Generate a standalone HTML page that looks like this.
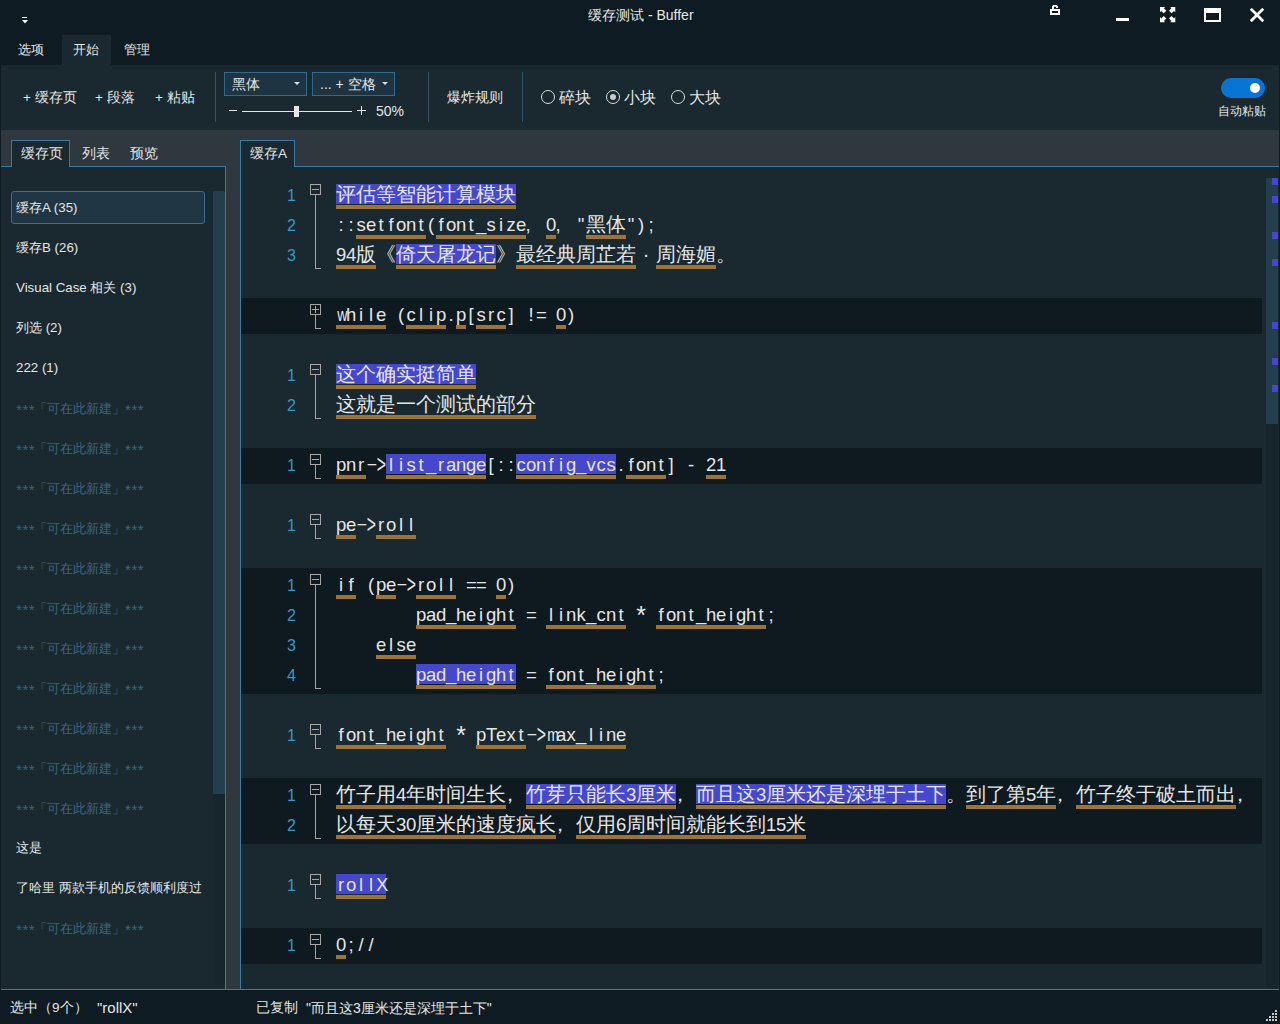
<!DOCTYPE html>
<html><head><meta charset="utf-8">
<style>
*{box-sizing:border-box}
html,body{margin:0;padding:0}
body{width:1280px;height:1024px;overflow:hidden;position:relative;background:#0f1b22;font-family:"Liberation Sans",sans-serif;color:#e6e6e6;font-size:13px}
.a{position:absolute}
.t{position:absolute;white-space:nowrap;line-height:20px}
.fb{position:absolute;left:310px;width:11px;height:11px;border:1px solid #a6a6a6}
.fm{position:absolute;left:312px;width:7px;height:1px;background:#a6a6a6}
.fv{position:absolute;left:315px;width:1px;height:7px;background:#a6a6a6}
.fl{position:absolute;left:315px;width:1px;background:#a6a6a6}
.ff{position:absolute;left:315px;width:6px;height:1px;background:#a6a6a6}
.ln{position:absolute;left:256px;width:40px;text-align:right;line-height:30px;font-size:16px;color:#3a98c2}
.hl{position:absolute;height:20px;background:#4547cc}
.ul{position:absolute;height:4px;background:#9e7436}
.ca{position:absolute;white-space:pre;line-height:30px;font-family:"Liberation Sans",sans-serif;font-size:18.5px;color:#e6e6e6;display:flex}
.ca i{display:block;width:10px;text-align:center;font-style:normal;height:30px}
.ca i.n{transform:scaleX(0.76)}
.ca i.u{transform:translateY(-1.5px)}
.ca i.c{transform:translateX(-3px)}
.ca i.s{transform:scale(1.35);transform-origin:50% 40%}
.ca i.d{transform:translate(1px,-1.5px) scaleX(1.9)}
.ca i.g{transform:scale(0.85,1.4);transform-origin:50% 57%}
.cj{position:absolute;white-space:pre;line-height:30px;font-size:20px;color:#e6e6e6}
.it{position:absolute;left:16px;white-space:nowrap;line-height:20px;font-size:13.3px}
</style></head><body>
<!-- title bar -->
<div class="a" style="left:0;top:0;width:1280px;height:65px;background:#0f1b22"></div>
<!-- app icon -->
<div class="a" style="left:22px;top:17px;width:5px;height:1px;background:#fff"></div>
<svg class="a" style="left:21px;top:19px" width="8" height="6" viewBox="0 0 8 6"><path d="M1 1H7L4 4.5Z" fill="#fff"/></svg>
<div class="t" style="left:588px;top:5px;font-size:14px;color:#e8e8e8">缓存测试 - Buffer</div>
<!-- lock -->
<svg class="a" style="left:1049px;top:4px" width="12" height="12" viewBox="0 0 12 12" fill="#fff"><path d="M3 5V2.5L4 1H7.6L9 2.2V4H7V2.8H5V5Z"/><path fill-rule="evenodd" d="M1 5H11V11H1ZM3 7H9V9H3Z"/></svg>
<!-- minimize -->
<div class="a" style="left:1116px;top:18px;width:13px;height:3px;background:#fff"></div>
<!-- fullscreen -->
<svg class="a" style="left:1160px;top:7px" width="16" height="16" viewBox="0 0 16 16" fill="#fff">
<path d="M0 0H5.2L3.9 1.3L6.3 3.7L3.7 6.3L1.3 3.9L0 5.2Z"/><path d="M0 0H5.2L3.9 1.3L6.3 3.7L3.7 6.3L1.3 3.9L0 5.2Z" transform="translate(15.3 0) scale(-1 1)"/><path d="M0 0H5.2L3.9 1.3L6.3 3.7L3.7 6.3L1.3 3.9L0 5.2Z" transform="translate(0 15.3) scale(1 -1)"/><path d="M0 0H5.2L3.9 1.3L6.3 3.7L3.7 6.3L1.3 3.9L0 5.2Z" transform="translate(15.3 15.3) scale(-1 -1)"/></svg>
<!-- maximize -->
<div class="a" style="left:1204px;top:8px;width:17px;height:14px;border:2px solid #fff;border-top-width:5px"></div>
<!-- close -->
<svg class="a" style="left:1250px;top:8px" width="14" height="14" viewBox="0 0 14 14"><path d="M0.8 0.8L13.2 13.2M13.2 0.8L0.8 13.2" stroke="#fff" stroke-width="2.8"/></svg>

<!-- menu -->
<div class="a" style="left:62px;top:35px;width:49px;height:30px;background:#19292f"></div>
<div class="t" style="left:18px;top:40px;font-size:13px">选项</div>
<div class="t" style="left:73px;top:40px;font-size:13px">开始</div>
<div class="t" style="left:124px;top:40px;font-size:13px">管理</div>

<!-- toolbar -->
<div class="a" style="left:1px;top:65px;width:1278px;height:65px;background:#19292f"></div>
<div class="t" style="left:23px;top:88px;font-size:13.5px">+ 缓存页</div>
<div class="t" style="left:95px;top:88px;font-size:13.5px">+ 段落</div>
<div class="t" style="left:155px;top:88px;font-size:13.5px">+ 粘贴</div>
<div class="a" style="left:215px;top:72px;width:1px;height:50px;background:#2f5468"></div>
<div class="a" style="left:224px;top:72px;width:83px;height:24px;background:#1f3442;border:1px solid #2f6a90"></div>
<div class="t" style="left:232px;top:74px;font-size:14px">黑体</div>
<div class="a" style="left:294px;top:82px;width:0;height:0;border-left:3px solid transparent;border-right:3px solid transparent;border-top:3px solid #ddd"></div>
<div class="a" style="left:312px;top:72px;width:83px;height:24px;background:#1f3442;border:1px solid #2f6a90"></div>
<div class="t" style="left:320px;top:74px;font-size:14px">... + 空格</div>
<div class="a" style="left:382px;top:82px;width:0;height:0;border-left:3px solid transparent;border-right:3px solid transparent;border-top:3px solid #ddd"></div>
<div class="a" style="left:229px;top:110px;width:8px;height:1px;background:#e8e8e8"></div>
<div class="a" style="left:242px;top:111px;width:110px;height:1px;background:#e8e8e8"></div>
<div class="a" style="left:294px;top:106px;width:5px;height:11px;background:#e6e6e6"></div>
<div class="a" style="left:357px;top:110px;width:9px;height:1px;background:#e8e8e8"></div><div class="a" style="left:361px;top:106px;width:1px;height:9px;background:#e8e8e8"></div>
<div class="t" style="left:376px;top:101px;font-size:14px">50%</div>
<div class="a" style="left:428px;top:72px;width:1px;height:50px;background:#2f5468"></div>
<div class="t" style="left:447px;top:88px;font-size:13.5px">爆炸规则</div>
<div class="a" style="left:522px;top:72px;width:1px;height:50px;background:#2f5468"></div>
<div class="a" style="left:541px;top:90px;width:14px;height:14px;border:1px solid #ddd;border-radius:50%"></div>
<div class="t" style="left:559px;top:88px;font-size:15.5px">碎块</div>
<div class="a" style="left:606px;top:90px;width:14px;height:14px;border:1px solid #ddd;border-radius:50%"></div>
<div class="a" style="left:610px;top:94px;width:6px;height:6px;background:#ccc;border-radius:50%"></div>
<div class="t" style="left:624px;top:88px;font-size:15.5px">小块</div>
<div class="a" style="left:671px;top:90px;width:14px;height:14px;border:1px solid #ddd;border-radius:50%"></div>
<div class="t" style="left:689px;top:88px;font-size:15.5px">大块</div>
<div class="a" style="left:1221px;top:78px;width:44px;height:20px;background:#0a74d4;border-radius:10px"></div>
<div class="a" style="left:1250px;top:83px;width:10px;height:10px;background:#fff;border-radius:50%"></div>
<div class="t" style="left:1218px;top:101px;font-size:12.3px">自动粘贴</div>

<!-- band -->
<div class="a" style="left:1px;top:130px;width:1278px;height:860px;background:#2e383e"></div>

<!-- left panel -->
<div class="a" style="left:1px;top:166px;width:225px;height:823px;background:#19292f;border-top:1px solid #3a7aa4;border-right:1px solid #3a7aa4"></div>
<div class="a" style="left:11px;top:140px;width:59px;height:27px;background:#19292f;border:1px solid #3a7aa4;border-bottom:none"></div>
<div class="t" style="left:21px;top:144px;font-size:13.5px">缓存页</div>
<div class="t" style="left:82px;top:144px;font-size:13.5px">列表</div>
<div class="t" style="left:130px;top:144px;font-size:13.5px">预览</div>
<div class="a" style="left:213px;top:191px;width:12px;height:794px;background:#17262d"></div>
<div class="a" style="left:213px;top:191px;width:12px;height:603px;background:#233f4e;border-radius:2px 2px 0 0"></div>
<div style="position:absolute;left:11px;top:191px;width:194px;height:33px;background:#203644;border:1px solid #33709a;border-radius:3px"></div>
<div class="it" style="top:198px;color:#e6e6e6">缓存A (35)</div>
<div class="it" style="top:238px;color:#e6e6e6">缓存B (26)</div>
<div class="it" style="top:278px;color:#e6e6e6">Visual Case 相关 (3)</div>
<div class="it" style="top:318px;color:#e6e6e6">列选 (2)</div>
<div class="it" style="top:358px;color:#e6e6e6">222 (1)</div>
<div class="it" style="top:400px;color:#3f6479;font-size:15px;letter-spacing:0.6px">***</div>
<div class="it" style="left:34px;top:399px;color:#3f6479;font-size:13.3px">「可在此新建」</div>
<div class="it" style="left:125px;top:400px;color:#3f6479;font-size:15px;letter-spacing:0.6px">***</div>
<div class="it" style="top:440px;color:#3f6479;font-size:15px;letter-spacing:0.6px">***</div>
<div class="it" style="left:34px;top:439px;color:#3f6479;font-size:13.3px">「可在此新建」</div>
<div class="it" style="left:125px;top:440px;color:#3f6479;font-size:15px;letter-spacing:0.6px">***</div>
<div class="it" style="top:480px;color:#3f6479;font-size:15px;letter-spacing:0.6px">***</div>
<div class="it" style="left:34px;top:479px;color:#3f6479;font-size:13.3px">「可在此新建」</div>
<div class="it" style="left:125px;top:480px;color:#3f6479;font-size:15px;letter-spacing:0.6px">***</div>
<div class="it" style="top:520px;color:#3f6479;font-size:15px;letter-spacing:0.6px">***</div>
<div class="it" style="left:34px;top:519px;color:#3f6479;font-size:13.3px">「可在此新建」</div>
<div class="it" style="left:125px;top:520px;color:#3f6479;font-size:15px;letter-spacing:0.6px">***</div>
<div class="it" style="top:560px;color:#3f6479;font-size:15px;letter-spacing:0.6px">***</div>
<div class="it" style="left:34px;top:559px;color:#3f6479;font-size:13.3px">「可在此新建」</div>
<div class="it" style="left:125px;top:560px;color:#3f6479;font-size:15px;letter-spacing:0.6px">***</div>
<div class="it" style="top:600px;color:#3f6479;font-size:15px;letter-spacing:0.6px">***</div>
<div class="it" style="left:34px;top:599px;color:#3f6479;font-size:13.3px">「可在此新建」</div>
<div class="it" style="left:125px;top:600px;color:#3f6479;font-size:15px;letter-spacing:0.6px">***</div>
<div class="it" style="top:640px;color:#3f6479;font-size:15px;letter-spacing:0.6px">***</div>
<div class="it" style="left:34px;top:639px;color:#3f6479;font-size:13.3px">「可在此新建」</div>
<div class="it" style="left:125px;top:640px;color:#3f6479;font-size:15px;letter-spacing:0.6px">***</div>
<div class="it" style="top:680px;color:#3f6479;font-size:15px;letter-spacing:0.6px">***</div>
<div class="it" style="left:34px;top:679px;color:#3f6479;font-size:13.3px">「可在此新建」</div>
<div class="it" style="left:125px;top:680px;color:#3f6479;font-size:15px;letter-spacing:0.6px">***</div>
<div class="it" style="top:720px;color:#3f6479;font-size:15px;letter-spacing:0.6px">***</div>
<div class="it" style="left:34px;top:719px;color:#3f6479;font-size:13.3px">「可在此新建」</div>
<div class="it" style="left:125px;top:720px;color:#3f6479;font-size:15px;letter-spacing:0.6px">***</div>
<div class="it" style="top:760px;color:#3f6479;font-size:15px;letter-spacing:0.6px">***</div>
<div class="it" style="left:34px;top:759px;color:#3f6479;font-size:13.3px">「可在此新建」</div>
<div class="it" style="left:125px;top:760px;color:#3f6479;font-size:15px;letter-spacing:0.6px">***</div>
<div class="it" style="top:800px;color:#3f6479;font-size:15px;letter-spacing:0.6px">***</div>
<div class="it" style="left:34px;top:799px;color:#3f6479;font-size:13.3px">「可在此新建」</div>
<div class="it" style="left:125px;top:800px;color:#3f6479;font-size:15px;letter-spacing:0.6px">***</div>
<div class="it" style="top:838px;color:#e6e6e6">这是</div>
<div class="it" style="top:878px;color:#e6e6e6">了哈里 两款手机的反馈顺利度过</div>
<div class="it" style="top:920px;color:#3f6479;font-size:15px;letter-spacing:0.6px">***</div>
<div class="it" style="left:34px;top:919px;color:#3f6479;font-size:13.3px">「可在此新建」</div>
<div class="it" style="left:125px;top:920px;color:#3f6479;font-size:15px;letter-spacing:0.6px">***</div>

<!-- editor panel -->
<div class="a" style="left:240px;top:166px;width:1039px;height:823px;background:#19292f;border-top:1px solid #3a7aa4;border-left:1px solid #3a7aa4"></div>
<div class="a" style="left:240px;top:140px;width:55px;height:27px;background:#19292f;border:1px solid #3a7aa4;border-bottom:none"></div>
<div class="t" style="left:250px;top:144px;font-size:13.5px">缓存A</div>
<div class="a" style="left:1266px;top:178px;width:12px;height:810px;background:#17262d"></div>
<div class="a" style="left:1266px;top:178px;width:12px;height:246px;background:#233f4e;border-radius:2px 2px 0 0"></div>
<div style="position:absolute;left:1272px;top:178px;width:6px;height:7px;background:#4547cc"></div>
<div style="position:absolute;left:1272px;top:196px;width:6px;height:7px;background:#4547cc"></div>
<div style="position:absolute;left:1272px;top:232px;width:6px;height:7px;background:#4547cc"></div>
<div style="position:absolute;left:1272px;top:259px;width:6px;height:7px;background:#4547cc"></div>
<div style="position:absolute;left:1272px;top:322px;width:6px;height:7px;background:#4547cc"></div>
<div style="position:absolute;left:1272px;top:358px;width:6px;height:7px;background:#4547cc"></div>
<div style="position:absolute;left:1272px;top:385px;width:6px;height:7px;background:#4547cc"></div>
<div class="fb" style="top:184px"></div>
<div class="fm" style="top:189px"></div>
<div class="fl" style="top:195px;height:73px"></div>
<div class="ff" style="top:268px"></div>
<div class="ln" style="top:181px">1</div>
<div class="hl" style="left:336px;top:184px;width:180px"></div>
<div class="ul" style="left:336px;top:205px;width:180px"></div>
<div class="cj" style="left:336px;top:179px">评估等智能计算模块</div>
<div class="ln" style="top:211px">2</div>
<div class="ul" style="left:356px;top:235px;width:70px"></div>
<div class="ul" style="left:436px;top:235px;width:90px"></div>
<div class="ul" style="left:546px;top:235px;width:10px"></div>
<div class="ul" style="left:586px;top:235px;width:40px"></div>
<div class="ca" style="left:336px;top:210px"><i>:</i><i>:</i><i>s</i><i>e</i><i>t</i><i>f</i><i>o</i><i>n</i><i>t</i><i>(</i><i>f</i><i>o</i><i>n</i><i>t</i><i class="u">_</i><i>s</i><i>i</i><i>z</i><i>e</i><i class="c">,</i><i></i><i>0</i><i class="c">,</i><i></i><i>&quot;</i></div>
<div class="cj" style="left:586px;top:209px">黑体</div>
<div class="ca" style="left:626px;top:210px"><i>&quot;</i><i>)</i><i>;</i></div>
<div class="ln" style="top:241px">3</div>
<div class="hl" style="left:396px;top:244px;width:100px"></div>
<div class="ul" style="left:336px;top:265px;width:40px"></div>
<div class="ul" style="left:396px;top:265px;width:100px"></div>
<div class="ul" style="left:516px;top:265px;width:120px"></div>
<div class="ul" style="left:656px;top:265px;width:60px"></div>
<div class="ca" style="left:336px;top:240px"><i>9</i><i>4</i></div>
<div class="cj" style="left:356px;top:239px">版《倚天屠龙记》最经典周芷若</div>
<div class="cj" style="left:636px;top:239px;width:20px;text-align:center">·</div>
<div class="cj" style="left:656px;top:239px">周海媚。</div>
<div style="position:absolute;left:241px;top:298px;width:1021px;height:36px;background:#0e1a20"></div>
<div class="fb" style="top:304px"></div>
<div class="fm" style="top:309px"></div><div class="fv" style="top:306px"></div>
<div class="fl" style="top:315px;height:13px"></div>
<div class="ff" style="top:328px"></div>
<div class="ul" style="left:336px;top:325px;width:50px"></div>
<div class="ul" style="left:406px;top:325px;width:40px"></div>
<div class="ul" style="left:456px;top:325px;width:10px"></div>
<div class="ul" style="left:476px;top:325px;width:30px"></div>
<div class="ul" style="left:556px;top:325px;width:10px"></div>
<div class="ca" style="left:336px;top:300px"><i class="n">w</i><i>h</i><i>i</i><i>l</i><i>e</i><i></i><i>(</i><i>c</i><i>l</i><i>i</i><i>p</i><i>.</i><i>p</i><i>[</i><i>s</i><i>r</i><i>c</i><i>]</i><i></i><i>!</i><i>=</i><i></i><i>0</i><i>)</i></div>
<div class="fb" style="top:364px"></div>
<div class="fm" style="top:369px"></div>
<div class="fl" style="top:375px;height:43px"></div>
<div class="ff" style="top:418px"></div>
<div class="ln" style="top:361px">1</div>
<div class="hl" style="left:336px;top:364px;width:140px"></div>
<div class="ul" style="left:336px;top:385px;width:140px"></div>
<div class="cj" style="left:336px;top:359px">这个确实挺简单</div>
<div class="ln" style="top:391px">2</div>
<div class="ul" style="left:336px;top:415px;width:200px"></div>
<div class="cj" style="left:336px;top:389px">这就是一个测试的部分</div>
<div style="position:absolute;left:241px;top:448px;width:1021px;height:36px;background:#0e1a20"></div>
<div class="fb" style="top:454px"></div>
<div class="fm" style="top:459px"></div>
<div class="fl" style="top:465px;height:13px"></div>
<div class="ff" style="top:478px"></div>
<div class="ln" style="top:451px">1</div>
<div class="hl" style="left:386px;top:454px;width:100px"></div>
<div class="hl" style="left:516px;top:454px;width:100px"></div>
<div class="ul" style="left:336px;top:475px;width:30px"></div>
<div class="ul" style="left:386px;top:475px;width:100px"></div>
<div class="ul" style="left:516px;top:475px;width:100px"></div>
<div class="ul" style="left:626px;top:475px;width:40px"></div>
<div class="ul" style="left:706px;top:475px;width:20px"></div>
<div class="ca" style="left:336px;top:450px"><i>p</i><i>n</i><i>r</i><i class="d">-</i><i class="g">&gt;</i><i>l</i><i>i</i><i>s</i><i>t</i><i class="u">_</i><i>r</i><i>a</i><i>n</i><i>g</i><i>e</i><i>[</i><i>:</i><i>:</i><i>c</i><i>o</i><i>n</i><i>f</i><i>i</i><i>g</i><i class="u">_</i><i>v</i><i>c</i><i>s</i><i>.</i><i>f</i><i>o</i><i>n</i><i>t</i><i>]</i><i></i><i>-</i><i></i><i>2</i><i>1</i></div>
<div class="fb" style="top:514px"></div>
<div class="fm" style="top:519px"></div>
<div class="fl" style="top:525px;height:13px"></div>
<div class="ff" style="top:538px"></div>
<div class="ln" style="top:511px">1</div>
<div class="ul" style="left:336px;top:535px;width:20px"></div>
<div class="ul" style="left:376px;top:535px;width:40px"></div>
<div class="ca" style="left:336px;top:510px"><i>p</i><i>e</i><i class="d">-</i><i class="g">&gt;</i><i>r</i><i>o</i><i>l</i><i>l</i></div>
<div style="position:absolute;left:241px;top:568px;width:1021px;height:126px;background:#0e1a20"></div>
<div class="fb" style="top:574px"></div>
<div class="fm" style="top:579px"></div>
<div class="fl" style="top:585px;height:103px"></div>
<div class="ff" style="top:688px"></div>
<div class="ln" style="top:571px">1</div>
<div class="ul" style="left:336px;top:595px;width:20px"></div>
<div class="ul" style="left:376px;top:595px;width:20px"></div>
<div class="ul" style="left:416px;top:595px;width:40px"></div>
<div class="ul" style="left:496px;top:595px;width:10px"></div>
<div class="ca" style="left:336px;top:570px"><i>i</i><i>f</i><i></i><i>(</i><i>p</i><i>e</i><i class="d">-</i><i class="g">&gt;</i><i>r</i><i>o</i><i>l</i><i>l</i><i></i><i>=</i><i>=</i><i></i><i>0</i><i>)</i></div>
<div class="ln" style="top:601px">2</div>
<div class="ul" style="left:416px;top:625px;width:100px"></div>
<div class="ul" style="left:546px;top:625px;width:80px"></div>
<div class="ul" style="left:656px;top:625px;width:110px"></div>
<div class="ca" style="left:336px;top:600px"><i></i><i></i><i></i><i></i><i></i><i></i><i></i><i></i><i>p</i><i>a</i><i>d</i><i class="u">_</i><i>h</i><i>e</i><i>i</i><i>g</i><i>h</i><i>t</i><i></i><i>=</i><i></i><i>l</i><i>i</i><i>n</i><i>k</i><i class="u">_</i><i>c</i><i>n</i><i>t</i><i></i><i class="s">*</i><i></i><i>f</i><i>o</i><i>n</i><i>t</i><i class="u">_</i><i>h</i><i>e</i><i>i</i><i>g</i><i>h</i><i>t</i><i>;</i></div>
<div class="ln" style="top:631px">3</div>
<div class="ul" style="left:376px;top:655px;width:40px"></div>
<div class="ca" style="left:336px;top:630px"><i></i><i></i><i></i><i></i><i>e</i><i>l</i><i>s</i><i>e</i></div>
<div class="ln" style="top:661px">4</div>
<div class="hl" style="left:416px;top:664px;width:100px"></div>
<div class="ul" style="left:416px;top:685px;width:100px"></div>
<div class="ul" style="left:546px;top:685px;width:110px"></div>
<div class="ca" style="left:336px;top:660px"><i></i><i></i><i></i><i></i><i></i><i></i><i></i><i></i><i>p</i><i>a</i><i>d</i><i class="u">_</i><i>h</i><i>e</i><i>i</i><i>g</i><i>h</i><i>t</i><i></i><i>=</i><i></i><i>f</i><i>o</i><i>n</i><i>t</i><i class="u">_</i><i>h</i><i>e</i><i>i</i><i>g</i><i>h</i><i>t</i><i>;</i></div>
<div class="fb" style="top:724px"></div>
<div class="fm" style="top:729px"></div>
<div class="fl" style="top:735px;height:13px"></div>
<div class="ff" style="top:748px"></div>
<div class="ln" style="top:721px">1</div>
<div class="ul" style="left:336px;top:745px;width:110px"></div>
<div class="ul" style="left:476px;top:745px;width:50px"></div>
<div class="ul" style="left:546px;top:745px;width:80px"></div>
<div class="ca" style="left:336px;top:720px"><i>f</i><i>o</i><i>n</i><i>t</i><i class="u">_</i><i>h</i><i>e</i><i>i</i><i>g</i><i>h</i><i>t</i><i></i><i class="s">*</i><i></i><i>p</i><i>T</i><i>e</i><i>x</i><i>t</i><i class="d">-</i><i class="g">&gt;</i><i class="n">m</i><i>a</i><i>x</i><i class="u">_</i><i>l</i><i>i</i><i>n</i><i>e</i></div>
<div style="position:absolute;left:241px;top:778px;width:1021px;height:66px;background:#0e1a20"></div>
<div class="fb" style="top:784px"></div>
<div class="fm" style="top:789px"></div>
<div class="fl" style="top:795px;height:43px"></div>
<div class="ff" style="top:838px"></div>
<div class="ln" style="top:781px">1</div>
<div class="hl" style="left:526px;top:784px;width:150px"></div>
<div class="hl" style="left:696px;top:784px;width:250px"></div>
<div class="ul" style="left:336px;top:805px;width:170px"></div>
<div class="ul" style="left:526px;top:805px;width:150px"></div>
<div class="ul" style="left:696px;top:805px;width:250px"></div>
<div class="ul" style="left:966px;top:805px;width:90px"></div>
<div class="ul" style="left:1076px;top:805px;width:160px"></div>
<div class="cj" style="left:336px;top:779px">竹子用</div>
<div class="ca" style="left:396px;top:780px"><i>4</i></div>
<div class="cj" style="left:406px;top:779px">年时间生长</div>
<div class="cj" style="left:500px;top:779px">，</div>
<div class="cj" style="left:526px;top:779px">竹芽只能长</div>
<div class="ca" style="left:626px;top:780px"><i>3</i></div>
<div class="cj" style="left:636px;top:779px">厘米</div>
<div class="cj" style="left:670px;top:779px">，</div>
<div class="cj" style="left:696px;top:779px">而且这</div>
<div class="ca" style="left:756px;top:780px"><i>3</i></div>
<div class="cj" style="left:766px;top:779px">厘米还是深埋于土下。到了第</div>
<div class="ca" style="left:1026px;top:780px"><i>5</i></div>
<div class="cj" style="left:1036px;top:779px">年</div>
<div class="cj" style="left:1050px;top:779px">，</div>
<div class="cj" style="left:1076px;top:779px">竹子终于破土而出</div>
<div class="cj" style="left:1230px;top:779px">，</div>
<div class="ln" style="top:811px">2</div>
<div class="ul" style="left:336px;top:835px;width:220px"></div>
<div class="ul" style="left:576px;top:835px;width:230px"></div>
<div class="cj" style="left:336px;top:809px">以每天</div>
<div class="ca" style="left:396px;top:810px"><i>3</i><i>0</i></div>
<div class="cj" style="left:416px;top:809px">厘米的速度疯长</div>
<div class="cj" style="left:550px;top:809px">，</div>
<div class="cj" style="left:576px;top:809px">仅用</div>
<div class="ca" style="left:616px;top:810px"><i>6</i></div>
<div class="cj" style="left:626px;top:809px">周时间就能长到</div>
<div class="ca" style="left:766px;top:810px"><i>1</i><i>5</i></div>
<div class="cj" style="left:786px;top:809px">米</div>
<div class="fb" style="top:874px"></div>
<div class="fm" style="top:879px"></div>
<div class="fl" style="top:885px;height:13px"></div>
<div class="ff" style="top:898px"></div>
<div class="ln" style="top:871px">1</div>
<div class="hl" style="left:336px;top:874px;width:50px"></div>
<div class="ul" style="left:336px;top:895px;width:50px"></div>
<div class="ca" style="left:336px;top:870px"><i>r</i><i>o</i><i>l</i><i>l</i><i>X</i></div>
<div style="position:absolute;left:241px;top:928px;width:1021px;height:36px;background:#0e1a20"></div>
<div class="fb" style="top:934px"></div>
<div class="fm" style="top:939px"></div>
<div class="fl" style="top:945px;height:13px"></div>
<div class="ff" style="top:958px"></div>
<div class="ln" style="top:931px">1</div>
<div class="ul" style="left:336px;top:955px;width:10px"></div>
<div class="ca" style="left:336px;top:930px"><i>0</i><i>;</i><i>/</i><i>/</i></div>

<!-- status bar -->
<div class="a" style="left:0;top:989px;width:1280px;height:1px;background:#3a7aa4"></div>
<div class="a" style="left:0;top:990px;width:1280px;height:34px;background:#0f1b22"></div>
<div class="t" style="left:10px;top:998px;font-size:13.5px">选中（9个）</div><div class="t" style="left:97px;top:998px;font-size:15px">"rollX"</div>
<div class="t" style="left:256px;top:998px;font-size:13.5px">已复制</div><div class="t" style="left:306px;top:998px;font-size:14px">"而且这3厘米还是深埋于土下"</div>
<svg class="a" style="left:1266px;top:1010px" width="12" height="12" viewBox="0 0 12 12" fill="#c8c8c8">
<rect x="9" y="0" width="2" height="2"/><rect x="6" y="3" width="2" height="2"/><rect x="9" y="3" width="2" height="2"/><rect x="3" y="6" width="2" height="2"/><rect x="6" y="6" width="2" height="2"/><rect x="9" y="6" width="2" height="2"/><rect x="0" y="9" width="2" height="2"/><rect x="3" y="9" width="2" height="2"/><rect x="6" y="9" width="2" height="2"/><rect x="9" y="9" width="2" height="2"/></svg>
<div class="a" style="left:1279px;top:0;width:1px;height:1024px;background:#0f1b22"></div>
<div class="a" style="left:0;top:0;width:1px;height:1024px;background:#0f1b22"></div>
</body></html>
